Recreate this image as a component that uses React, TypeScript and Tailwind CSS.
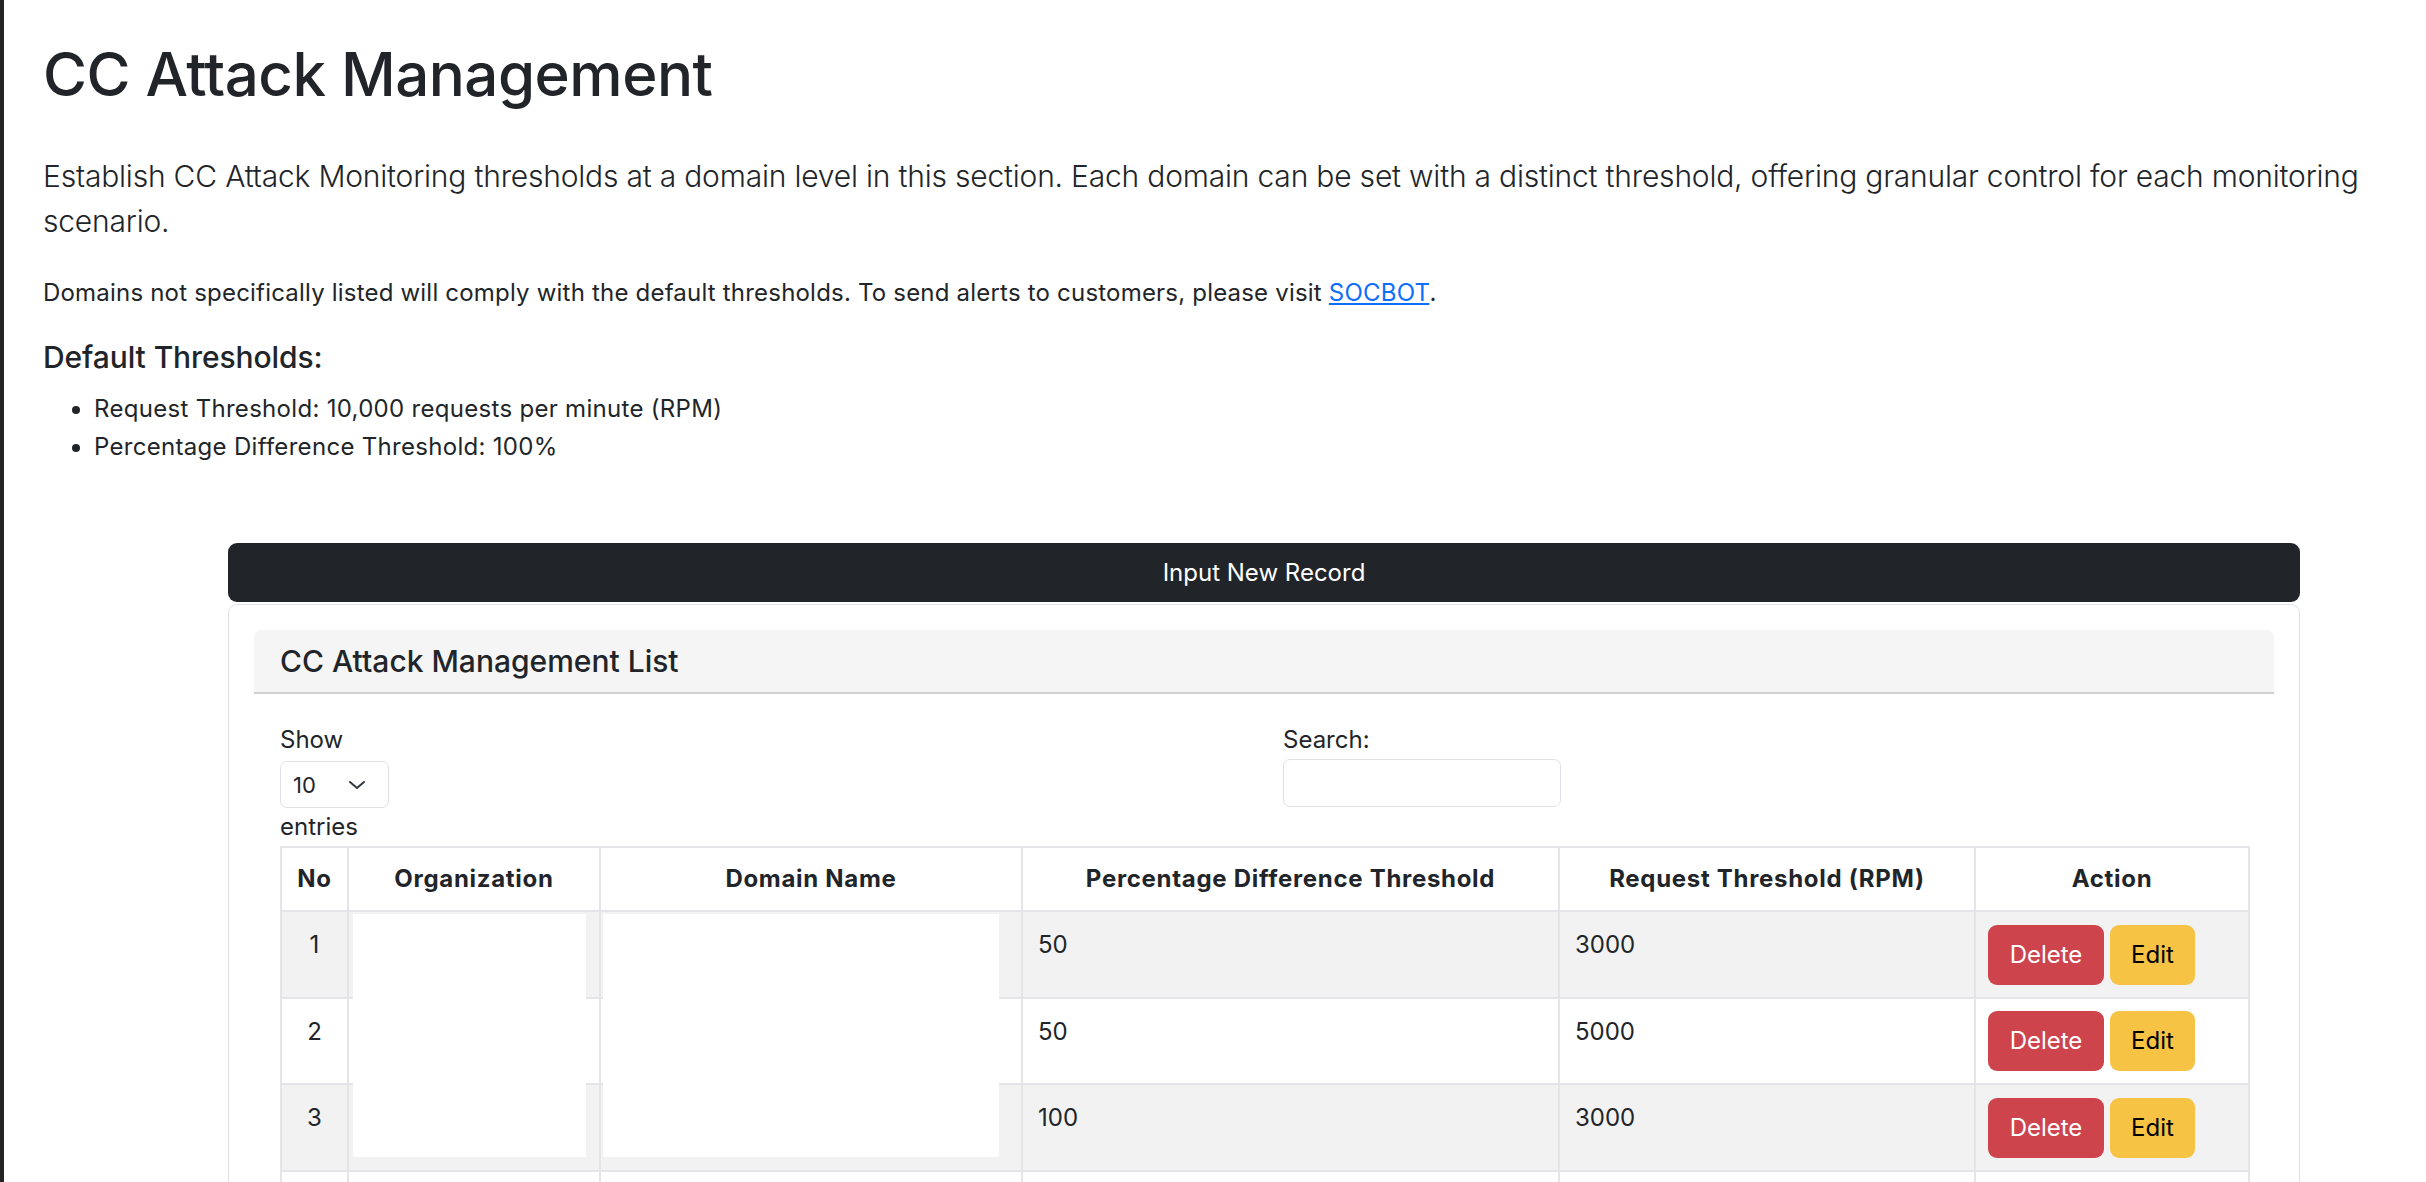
import React from "react";

const rows = [
  { no: "1", pct: "50", rpm: "3000" },
  { no: "2", pct: "50", rpm: "5000" },
  { no: "3", pct: "100", rpm: "3000" },
  { no: "", pct: "", rpm: "" },
];

export default function App() {
  return (
    <div className="flex min-h-screen bg-white font-['Inter','Liberation_Sans',sans-serif] text-[#212529]">
      <div className="w-[4px] shrink-0 bg-[#232323]" />
      <div className="flex-1 min-w-0">
        <div className="pl-[39px] pr-[43px] pt-[38px]">
          <h1 className="text-[60px] leading-[72px] font-medium tracking-[-0.5px]">CC Attack Management</h1>
          <p className="mt-[44px] text-[30px] leading-[45px] font-light tracking-[-0.2px]">
            Establish CC Attack Monitoring thresholds at a domain level in this section. Each domain can be set with a distinct threshold, offering granular control for each monitoring scenario.
          </p>
          <p className="mt-[31px] text-[24px] leading-[36px] tracking-[0.2px]">
            Domains not specifically listed will comply with the default thresholds. To send alerts to customers, please visit{" "}
            <a href="#" className="text-[#0d6efd] underline">SOCBOT</a>.
          </p>
          <h5 className="mt-[28px] text-[30px] leading-[36px] font-medium tracking-[-0.1px]">Default Thresholds:</h5>
          <ul className="mt-[15px] list-disc pl-[51px] text-[24px] leading-[38px] tracking-[0.3px]">
            <li>Request Threshold: 10,000 requests per minute (RPM)</li>
            <li>Percentage Difference Threshold: 100%</li>
          </ul>
        </div>

        <div className="ml-[224px] w-[2072px] mt-[77px]">
          <button className="flex h-[59px] w-full items-center justify-center rounded-[9px] bg-[#212529] text-[24px] text-white">
            Input New Record
          </button>
          <div className="mt-[2px] rounded-t-[9px] border border-b-0 border-[#dee2e6] px-[25px] pt-[25px] h-[600px]">
            <div className="flex h-[64px] items-center rounded-t-[8px] border-b-2 border-[#d0d0d0] bg-[#f5f5f5] px-[26px] text-[30px] font-medium">
              CC Attack Management List
            </div>
            <div className="pl-[26px] pr-[26px]">
              <div className="grid grid-cols-[1003px_1fr] pt-[28px] text-[24px] leading-[36px]">
                <div>
                  <div className="leading-[36px]">Show</div>
                  <div className="mt-[3px] flex h-[47px] w-[109px] items-center justify-between rounded-[7px] border border-[#dee2e6] pl-[12px] pr-[22px]">
                    <span className="text-[22px]">10</span>
                    <svg width="18" height="12" viewBox="0 0 18 12" fill="none">
                      <path d="M2 3l7 6 7-6" stroke="#343a40" strokeWidth="2" strokeLinecap="round" strokeLinejoin="round" />
                    </svg>
                  </div>
                  <div className="mt-[1px] leading-[36px]">entries</div>
                </div>
                <div>
                  <div className="leading-[36px]">Search:</div>
                  <div className="mt-[1px] h-[48px] w-[278px] rounded-[7px] border border-[#dee2e6]" />
                </div>
              </div>
              <div className="relative mt-[1px] w-[1968px]">
                <table className="w-full table-fixed border-collapse text-[24px] leading-[36px]">
                  <colgroup>
                    <col className="w-[67px]" />
                    <col className="w-[252px]" />
                    <col className="w-[422px]" />
                    <col className="w-[537px]" />
                    <col className="w-[416px]" />
                    <col className="w-[274px]" />
                  </colgroup>
                  <thead>
                    <tr className="h-[64px]">
                      <th className="border-2 border-[#e3e5e8] px-[8px] text-center font-bold tracking-[0.7px]">No</th>
                      <th className="border-2 border-[#e3e5e8] px-[12px] text-center font-bold tracking-[0.7px]">Organization</th>
                      <th className="border-2 border-[#e3e5e8] px-[12px] text-center font-bold tracking-[0.7px]">Domain Name</th>
                      <th className="border-2 border-[#e3e5e8] px-[12px] text-center font-bold tracking-[0.7px]">Percentage Difference Threshold</th>
                      <th className="border-2 border-[#e3e5e8] px-[12px] text-center font-bold tracking-[0.7px]">Request Threshold (RPM)</th>
                      <th className="border-2 border-[#e3e5e8] px-[12px] text-center font-bold tracking-[0.7px]">Action</th>
                    </tr>
                  </thead>
                  <tbody>
                    {rows.map((r, i) => (
                      <tr key={i} className={i % 2 === 0 ? "h-[87px] bg-[#f2f2f2]" : "h-[86px] bg-white"}>
                        <td className="border-2 border-[#e3e5e8] px-[12px] pt-[15px] align-top text-center">{r.no}</td>
                        <td className="border-2 border-[#e3e5e8] px-[15px] pt-[15px] align-top"></td>
                        <td className="border-2 border-[#e3e5e8] px-[15px] pt-[15px] align-top"></td>
                        <td className="border-2 border-[#e3e5e8] px-[15px] pt-[15px] align-top">{r.pct}</td>
                        <td className="border-2 border-[#e3e5e8] px-[15px] pt-[15px] align-top">{r.rpm}</td>
                        <td className="border-2 border-[#e3e5e8] px-[12px] align-middle">
                          {r.no !== "" && (
                            <div className="flex gap-[6px]">
                              <button className="h-[60px] w-[116px] rounded-[9px] bg-[#cd444c] text-[24px] text-white">Delete</button>
                              <button className="h-[60px] w-[85px] rounded-[9px] bg-[#f6c344] text-[24px] text-black">Edit</button>
                            </div>
                          )}
                        </td>
                      </tr>
                    ))}
                  </tbody>
                </table>
                <div className="absolute left-[73px] top-[68px] h-[243px] w-[233px] bg-white" />
                <div className="absolute left-[323px] top-[68px] h-[243px] w-[396px] bg-white" />
              </div>
            </div>
          </div>
        </div>
      </div>
    </div>
  );
}
